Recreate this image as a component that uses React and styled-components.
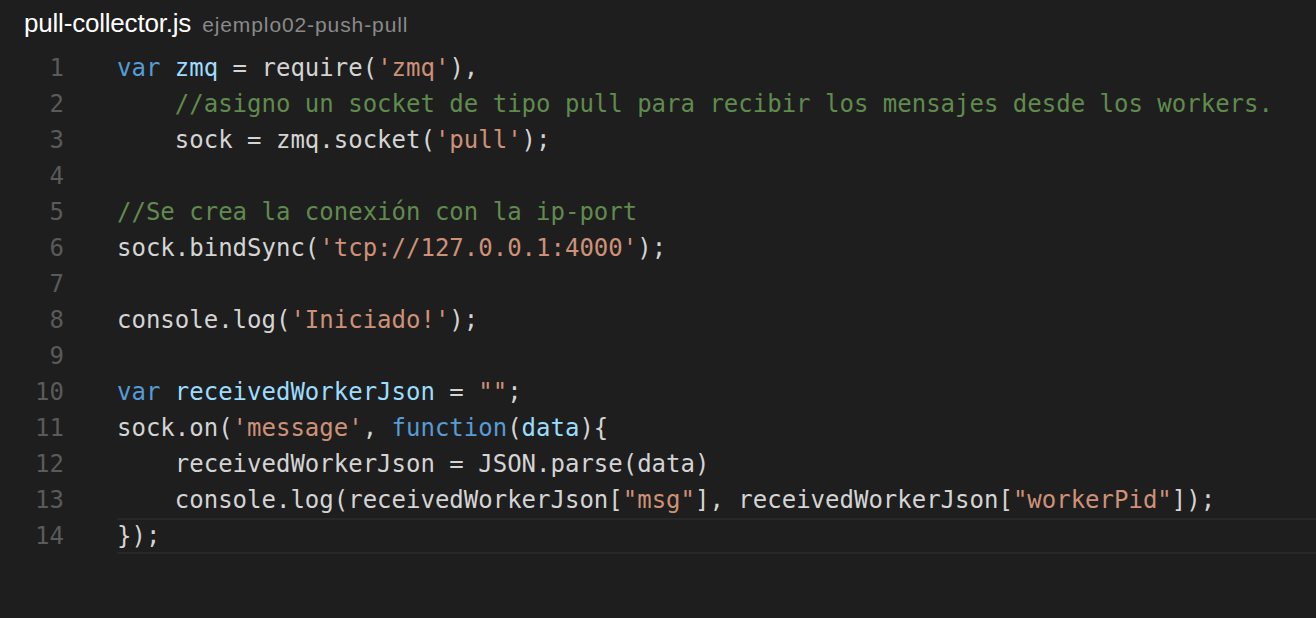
import React from 'react'
import styled, { createGlobalStyle } from 'styled-components'

const Global = createGlobalStyle`
  html, body { margin: 0; padding: 0; background: #1e1e1e; }
  body { width: 1316px; height: 618px; overflow: hidden; }
`

const colors = {
  plain: '#d4d4d4',
  kw: '#569cd6',
  id: '#9cdcfe',
  str: '#ce9178',
  com: '#608b4e',
}

// each line is a list of [kind, text]
const lines = [
  [['kw', 'var'], ['plain', ' '], ['id', 'zmq'], ['plain', ' = require('], ['str', "'zmq'"], ['plain', '),']],
  [['plain', '    '], ['com', '//asigno un socket de tipo pull para recibir los mensajes desde los workers.']],
  [['plain', '    sock = zmq.socket('], ['str', "'pull'"], ['plain', ');']],
  [],
  [['com', '//Se crea la conexión con la ip-port']],
  [['plain', 'sock.bindSync('], ['str', "'tcp://127.0.0.1:4000'"], ['plain', ');']],
  [],
  [['plain', 'console.log('], ['str', "'Iniciado!'"], ['plain', ');']],
  [],
  [['kw', 'var'], ['plain', ' '], ['id', 'receivedWorkerJson'], ['plain', ' = '], ['str', '""'], ['plain', ';']],
  [['plain', 'sock.on('], ['str', "'message'"], ['plain', ', '], ['kw', 'function'], ['plain', '('], ['id', 'data'], ['plain', '){']],
  [['plain', '    receivedWorkerJson = JSON.parse(data)']],
  [['plain', '    console.log(receivedWorkerJson['], ['str', '"msg"'], ['plain', '], receivedWorkerJson['], ['str', '"workerPid"'], ['plain', ']);']],
  [['plain', '});']],
]

const Page = styled.div`
  width: 1316px;
  height: 618px;
  background: #1e1e1e;
  display: flex;
  flex-direction: column;
`

const TitleBar = styled.div`
  height: 50px;
  display: flex;
  align-items: baseline;
  gap: 11px;
  padding: 8px 0 0 24px;
  box-sizing: border-box;
  font-family: "Liberation Sans", Arial, sans-serif;
`

const FileName = styled.span`
  color: #ffffff;
  font-size: 26px;
  letter-spacing: -0.2px;
`

const FolderName = styled.span`
  color: #8a8a8a;
  font-size: 21px;
  letter-spacing: 0.9px;
`

const Editor = styled.div`
  display: flex;
  flex-direction: column;
`

const Row = styled.div`
  display: flex;
  height: 36px;
  align-items: center;
  font-family: "DejaVu Sans Mono", "Liberation Mono", monospace;
  font-size: 24px;
`

const Gutter = styled.span`
  width: 64px;
  text-align: right;
  color: #5a5a5a;
  flex-shrink: 0;
`

const Code = styled.span`
  margin-left: 53px;
  flex: 1;
  height: 36px;
  line-height: 36px;
  white-space: pre;
  box-sizing: border-box;
  ${p => p.$current && `
    border-top: 2px solid #282828;
    border-bottom: 2px solid #282828;
    line-height: 32px;
  `}
`

const Token = styled.span`
  color: ${p => colors[p.$kind]};
`

export default function App() {
  return (
    <Page>
      <Global />
      <TitleBar>
        <FileName>pull-collector.js</FileName>
        <FolderName>ejemplo02-push-pull</FolderName>
      </TitleBar>
      <Editor>
        {lines.map((line, i) => (
          <Row key={i}>
            <Gutter>{i + 1}</Gutter>
            <Code $current={i === lines.length - 1}>
              {line.map(([kind, text], j) => (
                <Token key={j} $kind={kind}>{text}</Token>
              ))}
            </Code>
          </Row>
        ))}
      </Editor>
    </Page>
  )
}
